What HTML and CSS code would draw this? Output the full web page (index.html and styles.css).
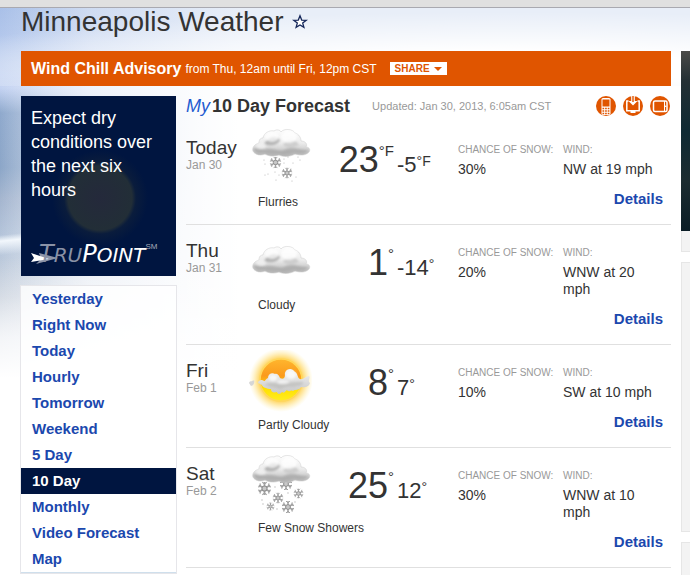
FILE: index.html
```html
<!DOCTYPE html>
<html lang="en">
<head>
<meta charset="utf-8">
<meta name="viewport" content="width=device-width, initial-scale=1">
<title>Minneapolis Weather</title>
<link rel="stylesheet" href="styles.css">
</head>
<body>
<svg class="defs" aria-hidden="true">
  <defs>
    <linearGradient id="cloudFill" x1="0" y1="0" x2="0" y2="1">
      <stop offset="0" stop-color="#fdfdfd"/><stop offset=".5" stop-color="#ececec"/><stop offset="1" stop-color="#b4b4b4"/>
    </linearGradient>
    <linearGradient id="puffFill" x1="0" y1="0" x2="0" y2="1">
      <stop offset="0" stop-color="#f6f6f6"/><stop offset="1" stop-color="#c6c6c6"/>
    </linearGradient>
    <radialGradient id="glow">
      <stop offset=".6" stop-color="#ffc832"/><stop offset=".78" stop-color="#ffdf80" stop-opacity=".7"/><stop offset="1" stop-color="#fff0b0" stop-opacity="0"/>
    </radialGradient>
    <linearGradient id="sunFill" x1="0" y1="0" x2="0" y2="1">
      <stop offset="0" stop-color="#ffb62e"/><stop offset=".4" stop-color="#fb9a1c"/><stop offset=".7" stop-color="#ffe000"/><stop offset="1" stop-color="#ffee20"/>
    </linearGradient>
    <filter id="soft" x="-20%" y="-20%" width="140%" height="140%"><feGaussianBlur stdDeviation="1.2"/></filter>
    <symbol id="cloud" viewBox="0 0 58 27" overflow="visible">
      <path d="M1 21C0 17 3 14 7 13C7 9 9 8 11 8C12 3 17 0 22 1C25-1 28 0 29 2C32-2 41-1 43 3C47 4 49 8 49 11C53 11 56 14 54 17C58 17 59 21 56 23C52 26 47 25 43 24C38 27 31 27 27 25C22 27 16 26 13 24C9 26 3 25 1 21Z" fill="url(#cloudFill)" stroke="#d2d2d2" stroke-width=".6"/>
      <g filter="url(#soft)">
        <path d="M1 19C5 17 10 20 15 19C22 18 28 23 34 19C42 16 46 20 56 20C55 24 46 24 42 23C36 25 30 25 26 24C19 25 14 23 11 23C7 24 3 23 1 19Z" fill="#a2a2a2" opacity=".65"/>
        <path d="M12 14C16 7 24 5 28 10C26 15 19 17 12 14Z" fill="#b4b4b4"/>
        <path d="M31 15C36 8 43 9 47 15C41 19 35 19 31 15Z" fill="#cecece"/>
      </g>
      <ellipse cx="20" cy="7" rx="7" ry="5" fill="#fff" opacity=".7" filter="url(#soft)"/>
      <ellipse cx="37" cy="7" rx="8" ry="6" fill="#fff" opacity=".8" filter="url(#soft)"/>
      <ellipse cx="9" cy="16" rx="5" ry="3" fill="#f4f4f4" opacity=".7" filter="url(#soft)"/>
    </symbol>
    <symbol id="flake" viewBox="-7 -7 14 14" overflow="visible">
      <g stroke="#a2a2a2" stroke-width="1.5" fill="none">
        <path d="M0-6V6M-5.2-3L5.2 3M-5.2 3L5.2-3"/>
        <path d="M-2-6L0-4L2-6M-2 6L0 4L2 6M-6-1.3L-3.5-2L-4.2-4.7M6 1.3L3.5 2L4.2 4.7M-6 1.3L-3.5 2L-4.2 4.7M6-1.3L3.5-2L4.2-4.7" stroke-width="1"/>
      </g>
      <circle r="2.4" fill="#c8c8c8" stroke="#8e8e8e"/>
    </symbol>
  </defs>
</svg>

<div class="topbar"></div>
<div class="page">
  <main class="content">
    <header class="title">
      <h1>Minneapolis Weather</h1>
      <button class="star" type="button" aria-label="Favorite">
        <svg width="16" height="16" viewBox="0 0 16 16"><path d="M8 1.800L9.700 6.100L14.300 6.300L10.700 9.100L11.900 13.400L8 10.900L4.100 13.400L5.300 9.100L1.700 6.300L6.300 6.100Z" fill="#fff" stroke="#14265a" stroke-width="1.300"/></svg>
      </button>
    </header>

    <section class="alert">
      <strong>Wind Chill Advisory</strong>
      <span>from Thu, 12am until Fri, 12pm CST</span>
      <button class="share" type="button">SHARE <i class="caret"></i></button>
    </section>

    <div class="columns">
      <aside class="side">
        <section class="trupoint">
          <p>Expect dry conditions over the next six hours</p>
          <div class="logo">
            <svg class="arrow" width="28" height="22" viewBox="0 0 28 22" aria-hidden="true"><path d="M5 21L10 16L8 10L27 15Z" fill="#8e95a8"/><path d="M0 10L18 16L0 19L3 15Z" fill="#fff"/></svg>
            <span class="wordmark"><span class="tru"><b>T</b>RU</span><span class="point"><b>P</b>OINT</span></span><small>SM</small>
          </div>
        </section>
        <nav class="menu">
          <a href="#">Yesterday</a>
          <a href="#">Right Now</a>
          <a href="#">Today</a>
          <a href="#">Hourly</a>
          <a href="#">Tomorrow</a>
          <a href="#">Weekend</a>
          <a href="#">5 Day</a>
          <a href="#" class="current" aria-current="page">10 Day</a>
          <a href="#">Monthly</a>
          <a href="#">Video Forecast</a>
          <a href="#">Map</a>
        </nav>
      </aside>

      <section class="forecast">
        <header class="forecast-head">
          <h2><em>My</em>10 Day Forecast</h2>
          <span class="updated">Updated: Jan 30, 2013, 6:05am CST</span>
          <div class="devices">
            <button type="button" aria-label="Mobile"><svg width="20" height="20" viewBox="0 0 20 20"><circle cx="10" cy="10" r="10" fill="#e05500"/><rect x="5.500" y="2" width="9" height="17" rx="1.500" fill="#fff"/><rect x="6.500" y="3.500" width="7" height="7" fill="#e05500"/><path d="M6.500 12.500H13.500M6.500 15H13.500M6.500 17.500H13.500" stroke="#e05500" stroke-width="1.500" stroke-dasharray="1.700 .900"/></svg></button>
            <button type="button" aria-label="Desktop download"><svg width="20" height="20" viewBox="0 0 20 20"><circle cx="10" cy="10" r="10" fill="#e05500"/><path d="M8.200 0H11.800V5H14.500L10 9.500L5.500 5H8.200Z" fill="#fff"/><path d="M9.300 0H10.700V6H9.300Z" fill="#e05500"/><path d="M5.500 5H3.800V14.800H16.200V5H14.500" fill="none" stroke="#fff" stroke-width="1.500"/><path d="M7.500 15H12.500V17H7.500Z" fill="#fff"/></svg></button>
            <button type="button" aria-label="Tablet"><svg width="20" height="20" viewBox="0 0 20 20"><circle cx="10" cy="10" r="10" fill="#e05500"/><rect x="3.500" y="5" width="13.500" height="10.500" rx="1.500" fill="none" stroke="#fff" stroke-width="1.500"/><path d="M14.500 5V15.500" stroke="#fff"/><circle cx="15.700" cy="10.200" r=".8" fill="#fff"/></svg></button>
          </div>
        </header>

        <article class="day">
          <div class="date"><h3>Today</h3><time>Jan 30</time></div>
          <figure>
            <svg width="64" height="64" viewBox="0 0 64 64" aria-hidden="true">
              <use href="#cloud" x="4" y="3" width="58" height="27"/>
              <use href="#flake" x="21" y="29" width="13" height="13"/><use href="#flake" x="33" y="40" width="12" height="12"/>
              <path d="M16 33h0M36 32h0M40 30h0M50 30h0M36 36h0M45 36h0M43 42h0M20 47h0M27 45h0M17 48h0M48 50h0M28 53h0M52 33h0M17 37h0M44 54h0M31 48h0" fill="none" stroke="#b5b5b5" stroke-linecap="round" stroke-width="1.200"/>
            </svg>
            <figcaption>Flurries</figcaption>
          </figure>
          <div class="temps"><span class="high">23<sup>°F</sup></span><span class="low">-5<sup>°F</sup></span></div>
          <dl class="snow"><dt>CHANCE OF SNOW:</dt><dd>30%</dd></dl>
          <div class="wind"><dl><dt>WIND:</dt><dd>NW at 19 mph</dd></dl><a href="#">Details</a></div>
        </article>

        <article class="day">
          <div class="date"><h3>Thu</h3><time>Jan 31</time></div>
          <figure>
            <svg width="64" height="64" viewBox="0 0 64 64" aria-hidden="true"><use href="#cloud" x="4" y="17" width="58" height="27"/></svg>
            <figcaption>Cloudy</figcaption>
          </figure>
          <div class="temps"><span class="high">1<sup>°</sup></span><span class="low">-14<sup>°</sup></span></div>
          <dl class="snow"><dt>CHANCE OF SNOW:</dt><dd>20%</dd></dl>
          <div class="wind"><dl><dt>WIND:</dt><dd>WNW at 20 mph</dd></dl><a href="#">Details</a></div>
        </article>

        <article class="day">
          <div class="date"><h3>Fri</h3><time>Feb 1</time></div>
          <figure>
            <svg width="64" height="64" viewBox="0 0 64 64" aria-hidden="true">
              <circle cx="33" cy="30" r="32" fill="url(#glow)"/>
              <circle cx="33" cy="30" r="21" fill="url(#sunFill)" stroke="#ffd75a" stroke-width="1.500"/>
              <path d="M10 33C10 30 14 29 16 31C18 31 17 29 20 28C20 24 24 22 27 24C30 23 31 26 32 28C35 30 37 28 37 25C36 20 43 16 47 22C50 23 49 28 52 29C55 30 56 27 61 26C63 28 59 30 62 33C61 37 56 38 53 37C51 41 47 39 45 41C43 39 41 43 39 40C37 41 37 44 34 42C32 45 29 44 29 42C25 43 23 42 23 39C19 39 14 37 14 35Z" fill="url(#puffFill)"/>
              <g filter="url(#soft)">
                <path d="M17 34C23 31 29 34 35 33C41 33 46 31 55 32C57 36 48 36 45 37C39 36 35 38 32 39C26 37 20 37 17 34Z" fill="#a8a8a4" opacity=".4"/>
                <ellipse cx="43" cy="25" rx="5" ry="4" fill="#fff" opacity=".7"/><ellipse cx="25" cy="28" rx="4" ry="3" fill="#fff" opacity=".7"/>
                <ellipse cx="35" cy="32" rx="6" ry="2" fill="#fff" opacity=".6"/>
              </g>
              <path d="M1 33C2 30 5 32 6 30C7 33 5 36 3 36Z" fill="#d6d6d6"/>
            </svg>
            <figcaption>Partly Cloudy</figcaption>
          </figure>
          <div class="temps"><span class="high">8<sup>°</sup></span><span class="low">7<sup>°</sup></span></div>
          <dl class="snow"><dt>CHANCE OF SNOW:</dt><dd>10%</dd></dl>
          <div class="wind"><dl><dt>WIND:</dt><dd>SW at 10 mph</dd></dl><a href="#">Details</a></div>
        </article>

        <article class="day">
          <div class="date"><h3>Sat</h3><time>Feb 2</time></div>
          <figure>
            <svg width="64" height="64" viewBox="0 0 64 64" aria-hidden="true">
              <use href="#flake" x="31" y="24" width="14" height="14"/>
              <use href="#cloud" x="4" y="3" width="58" height="27"/>
              <use href="#flake" x="9" y="28" width="15" height="15"/><use href="#flake" x="24" y="39" width="12" height="12"/>
              <use href="#flake" x="45" y="35" width="11" height="11"/><use href="#flake" x="18" y="49" width="9" height="9"/><use href="#flake" x="33" y="47" width="14" height="14"/>
              <path d="M27 34h0M14 47h0M40 40h0M47 49h0M29 56h0M15 51h0" fill="none" stroke="#b5b5b5" stroke-linecap="round" stroke-width="1.300"/>
            </svg>
            <figcaption>Few Snow Showers</figcaption>
          </figure>
          <div class="temps"><span class="high">25<sup>°</sup></span><span class="low">12<sup>°</sup></span></div>
          <dl class="snow"><dt>CHANCE OF SNOW:</dt><dd>30%</dd></dl>
          <div class="wind"><dl><dt>WIND:</dt><dd>WNW at 10 mph</dd></dl><a href="#">Details</a></div>
        </article>
      </section>
    </div>
  </main>

  <aside class="rail">
    <div class="photo"></div>
    <div class="panel caption"></div>
    <div class="panel tall"></div>
    <div class="panel rest"></div>
  </aside>
</div>
</body>
</html>
```
FILE: styles.css
```css
* { box-sizing: border-box; }

body {
  margin: 0;
  min-height: 100vh;
  display: flex;
  flex-direction: column;
  font-family: "Liberation Sans", Arial, sans-serif;
  color: #333;
  background: #fff;
}

h1, h2, h3, p, dl, dd, figure { margin: 0; }
button { border: 0; padding: 0; background: none; font-family: inherit; }
a { color: #1b48ae; font-size: 15px; font-weight: bold; text-decoration: none; }
.defs { position: absolute; width: 0; height: 0; }

.topbar { height: 8px; background: #e0e0e0; border-bottom: 1px solid #a9a9b0; }

/* Sky fades out to the right and towards the bottom */
.page {
  flex: 1;
  display: grid;
  grid-template-columns: minmax(0, 1fr) 9px;
  column-gap: 10px;
  padding-left: 21px;
  background:
    linear-gradient(174deg, transparent 226px, #f2f7fc 232px, transparent 246px) 0 0 / 21px 100% no-repeat,
    linear-gradient(to bottom, rgba(255, 255, 255, 0) 250px, #fff 370px),
    linear-gradient(to right, rgba(255, 255, 255, 0) 0, rgba(255, 255, 255, .55) 90px, #fff 240px) 0 78px no-repeat,
    radial-gradient(ellipse 640px 56px at 75% 60px, #fff 30%, rgba(255, 255, 255, 0)) 0 0 / 100% 78px no-repeat,
    linear-gradient(to right, rgba(232, 238, 248, 0) 0, rgba(232, 238, 248, .6) 90px, #e8eef8 240px),
    linear-gradient(to bottom, #a9c0e8 0, #c4d3f2 80px, #8fa9cd 105px, #8ca6c8 160px, #a4b5cf 190px, #b7c7dc 235px, #c3ccd9 290px, #dde2ea 330px);
}

.title { display: flex; align-items: center; gap: 8px; height: 28px; }
h1 { font-size: 28px; line-height: 28px; font-weight: normal; }
.star { display: flex; width: 16px; height: 16px; }

.alert {
  display: flex;
  align-items: center;
  gap: 4px;
  height: 35px;
  margin-top: 15px;
  padding-left: 10px;
  background: #e05500;
  color: #fff;
  font-size: 12px;
}
.alert strong { font-size: 16px; }
.share {
  display: flex;
  align-items: center;
  gap: 4px;
  height: 13px;
  margin-left: 9px;
  padding: 0 5px;
  background: #fff;
  color: #e05500;
  font-size: 10px;
  font-weight: bold;
}
.caret { border: 4px solid transparent; border-top-color: #e05500; border-bottom: 0; }

.columns { display: grid; grid-template-columns: 155px minmax(0, 1fr); column-gap: 10px; margin-top: 10px; }

.trupoint {
  display: flex;
  flex-direction: column;
  justify-content: space-between;
  min-height: 180px;
  padding: 10px;
  color: #fff;
  background: radial-gradient(circle at 79px 102px, #24293b 0, #222e37 32px, #0a1c3c 36px, #001540 48px);
}
.trupoint p { font-size: 18px; line-height: 24px; }
.logo { display: flex; align-items: flex-start; }
.arrow { flex: none; margin-right: -20px; }
.wordmark { font: italic 20px/22px "DejaVu Sans", sans-serif; }
.wordmark b { font-size: 24px; font-weight: normal; }
.tru { color: #8a92a6; }
.point { color: #fff; }
.logo small { font-size: 8px; line-height: 8px; color: #a4abba; }

.menu {
  margin-top: 10px;
  border-bottom: 1px solid #cfdfec;
  background: rgba(255, 255, 255, .8);
  box-shadow: 0 0 0 1px #e6e6ea;
}
.menu a { display: block; padding-left: 11px; line-height: 26px; }
.menu .current { background: #001540; color: #fff; }

.forecast-head { display: flex; align-items: center; height: 20px; margin-bottom: 6px; }
h2 { font-size: 18px; line-height: 20px; white-space: nowrap; }
h2 em { padding-right: 2px; font-weight: normal; color: #1f5bd0; }
.updated { margin-left: 22px; font-size: 11px; color: #999; white-space: nowrap; }
.devices { display: flex; gap: 7px; margin-left: auto; padding-right: 1px; }
.devices button, .devices svg { display: block; }

.day {
  display: grid;
  grid-template-columns: 62px minmax(0, 1fr) 120px 105px 108px;
  border-bottom: 1px solid #e0e0e0;
}
.date { padding-top: 16px; }
h3 { font-size: 19px; line-height: 20px; font-weight: normal; }
time { display: block; font-size: 12px; line-height: 15px; color: #999; }
figure { padding-top: 5px; white-space: nowrap; }
figure svg { display: block; }
figcaption { padding-left: 10px; font-size: 12px; line-height: 22px; }

.temps { display: flex; align-items: baseline; gap: 3px; padding-top: 18px; white-space: nowrap; }
.high { flex: none; width: 56px; display: flex; justify-content: flex-end; font-size: 36px; line-height: 40px; }
.low { display: flex; font-size: 22px; line-height: 24px; }
sup { font-size: 14px; line-height: 16px; }
.high sup { padding-top: 2px; font-size: 15px; line-height: 18px; }

.snow, .wind { padding-top: 20px; }
dt { font-size: 10px; line-height: 16px; color: #999; white-space: nowrap; }
dd { padding-top: 3px; font-size: 14px; line-height: 17px; }
.wind { padding-right: 8px; padding-bottom: 17px; }
.wind a { display: block; padding-top: 12px; line-height: 17px; text-align: right; }

.rail { display: flex; flex-direction: column; padding-top: 43px; }
.photo { height: 180px; background: linear-gradient(to bottom, #4a4a48 0, #243034 30px, #0f2a33 80px, #1c2c30 130px, #0a1d26 180px); }
.panel { background: #f3f3f3; border: 1px solid #e6e6e6; border-right: 0; }
.caption { height: 21px; border-top: 0; }
.tall { height: 270px; margin-top: 10px; }
.rest { flex: 1; margin-top: 10px; border-bottom: 0; }
```
